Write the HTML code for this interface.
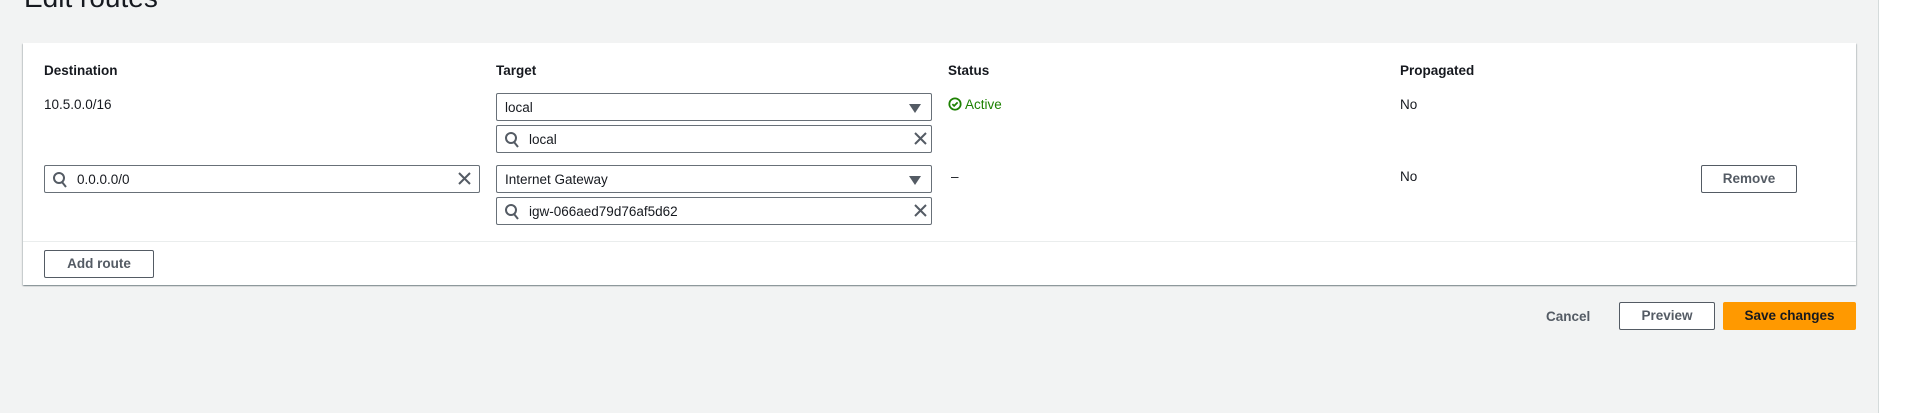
<!DOCTYPE html>
<html><head><style>
body{margin:0;width:1920px;height:413px;background:#f2f3f3;font-family:"Liberation Sans",sans-serif;color:#16191f;position:relative;overflow:hidden;font-size:13.5px}
.a{position:absolute}
.panel{left:23px;top:43px;width:1833px;height:242px;background:#fff;box-shadow:0 1px 1px rgba(0,28,36,.3),1px 1px 1px rgba(0,28,36,.15),-1px 1px 1px rgba(0,28,36,.15);}
.h{font-weight:bold;top:63px}
.box{position:absolute;border:1px solid #687078;height:28px;background:#fff;box-sizing:border-box;border-radius:2px}
.box span{position:absolute;left:8px;top:6px}
.box.s span{left:32px}
.btn{position:absolute;border:1px solid #545b64;background:#fff;font-weight:bold;color:#545b64;box-sizing:border-box;text-align:center;line-height:26px;border-radius:2px}
</style></head><body>
<div class="a" style="left:24px;top:-18px;font-size:28px;">Edit routes</div>
<div class="a" style="left:1878px;top:0;width:1px;height:413px;background:#d5dbdb"></div>
<div class="a" style="left:1879px;top:0;width:41px;height:413px;background:#fff"></div>
<div class="a panel"></div>
<div class="a" style="left:23px;top:241px;width:1833px;height:1px;background:#eaeded"></div>
<div class="a h" style="left:44px">Destination</div>
<div class="a h" style="left:496px">Target</div>
<div class="a h" style="left:948px">Status</div>
<div class="a h" style="left:1400px">Propagated</div>
<div class="a" style="left:44px;top:97px">10.5.0.0/16</div>
<div class="a" style="left:1400px;top:97px">No</div>
<div class="a" style="left:1400px;top:169px">No</div>
<div class="a" style="left:951px;top:169px">–</div>
<div class="a" style="left:948px;top:97px;color:#1d8102"><svg width="14" height="14" viewBox="0 0 16 16" style="vertical-align:-2px"><circle cx="8" cy="8" r="6.5" fill="none" stroke="#1d8102" stroke-width="2"/><path d="M5 8.2l2 2 4-4" fill="none" stroke="#1d8102" stroke-width="2"/></svg> Active</div>
<div class="box" style="left:496px;top:93px;width:436px"><span>local</span><svg class="a" style="right:10px;top:10px" width="12" height="9"><path d="M0 0h12L6 9z" fill="#545b64"/></svg></div>
<div class="box s" style="left:496px;top:125px;width:436px"><span>local</span></div>
<div class="box s" style="left:44px;top:165px;width:436px"><span>0.0.0.0/0</span></div>
<div class="box" style="left:496px;top:165px;width:436px"><span>Internet Gateway</span><svg class="a" style="right:10px;top:10px" width="12" height="9"><path d="M0 0h12L6 9z" fill="#545b64"/></svg></div>
<div class="box s" style="left:496px;top:197px;width:436px"><span>igw-066aed79d76af5d62</span></div>
<svg class="a" style="left:0;top:0" width="1920" height="413">
<g fill="none" stroke="#545b64" stroke-width="2">
<circle cx="511" cy="138" r="5"/><path d="M514 142l4 5"/>
<circle cx="511" cy="210" r="5"/><path d="M514 214l4 5"/>
<circle cx="59" cy="178" r="5"/><path d="M62 182l4 5"/>
<path d="M915 133l11 11M926 133l-11 11"/>
<path d="M915 205l11 11M926 205l-11 11"/>
<path d="M459 173l11 11M470 173l-11 11"/>
</g></svg>
<div class="btn" style="left:44px;top:250px;width:110px;height:28px">Add route</div>
<div class="btn" style="left:1701px;top:165px;width:96px;height:28px">Remove</div>
<div class="a" style="left:1546px;top:309px;font-weight:bold;color:#545b64">Cancel</div>
<div class="btn" style="left:1619px;top:302px;width:96px;height:28px">Preview</div>
<div class="a" style="left:1723px;top:302px;width:133px;height:28px;background:#ff9900;font-weight:bold;text-align:center;line-height:28px;border-radius:2px">Save changes</div>
</body></html>
